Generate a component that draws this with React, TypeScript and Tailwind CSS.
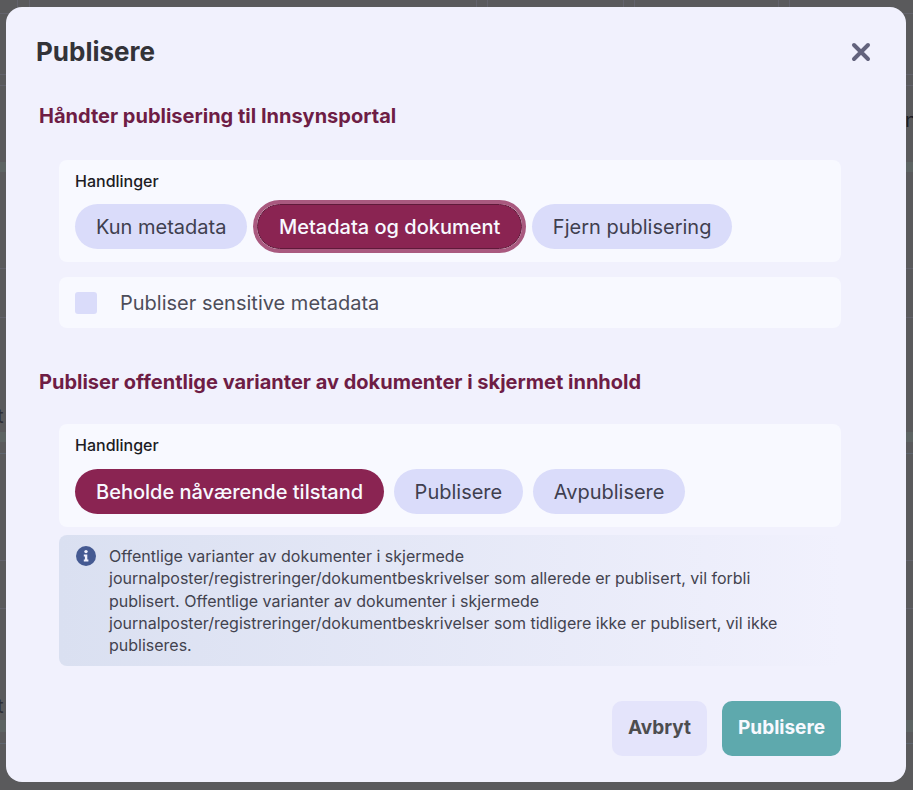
const F = "font-['Inter',sans-serif]";

const ROW_LINES: { top: number; h: number; color: string }[] = [
  { top: 13, h: 1, color: "#63636c" },
  { top: 74, h: 1, color: "#63636c" },
  { top: 85, h: 1, color: "#63636c" },
  { top: 162, h: 10, color: "#5d6463" },
  { top: 268, h: 1, color: "#63636c" },
  { top: 317, h: 1, color: "#63636c" },
  { top: 432, h: 10, color: "#5d6463" },
  { top: 453, h: 1, color: "#5f6670" },
  { top: 560, h: 1, color: "#63636c" },
  { top: 608, h: 1, color: "#63636c" },
  { top: 720, h: 12, color: "#5d6463" },
  { top: 743, h: 1, color: "#5f6670" },
];
const COL_LINES = [17, 29, 476, 487, 623, 634, 778, 789];

function Backdrop() {
  return (
    <div className="absolute inset-0">
      {ROW_LINES.map((l) => (
        <div key={l.top} className="absolute inset-x-0" style={{ top: l.top, height: l.h, backgroundColor: l.color }} />
      ))}
      {COL_LINES.map((x) => (
        <div key={x} className="absolute top-0 h-[8px] w-px bg-[#63636c]" style={{ left: x }} />
      ))}
      <span className="absolute top-[404px] -left-[3px] text-[20px] leading-[24px] text-[#2e2e36]">t</span>
      <span className="absolute top-[694px] -left-[3px] text-[20px] leading-[24px] text-[#2e2e36]">t</span>
      <span className="absolute top-[108px] left-[905px] text-[20px] leading-[24px] text-[#1f1f26]">n</span>
    </div>
  );
}

function Pill({ label, active, focus }: { label: string; active?: boolean; focus?: boolean }) {
  return (
    <button
      className={
        "h-[45px] rounded-full px-[21px] text-[20px] whitespace-nowrap " +
        (active ? "bg-[#8a2452] font-medium text-[#f8f9ff] " : "bg-[#dadcfa] text-[#3f3f4f] ") +
        (focus ? "border border-[#5f1a3a] outline-[4px] outline-[#a9597f]" : "")
      }
    >
      {label}
    </button>
  );
}

function Actions({ items, className, rowClass }: { items: { label: string; active?: boolean; focus?: boolean }[]; className: string; rowClass: string }) {
  return (
    <div className={"rounded-lg bg-[#f8f9ff] px-4 " + className}>
      <div className="text-[16px] leading-[20px] font-medium text-[#1c1c24]">Handlinger</div>
      <div className={"flex gap-[9.5px] " + rowClass}>
        {items.map((i) => (
          <Pill key={i.label} {...i} />
        ))}
      </div>
    </div>
  );
}

export default function App() {
  return (
    <div className={F + " relative h-[790px] w-[913px] overflow-hidden bg-[#5a5a5c] pt-[7px] pl-[6px]"}>
      <Backdrop />
      <div className="relative h-[775px] w-[900px] rounded-2xl bg-[#f1f1fd] pt-[30px] pr-[65px] pl-[30px]">
        <div className="flex items-center justify-between">
          <h1 className="text-[26px] leading-[30px] font-bold text-[#333338]">Publisere</h1>
          <svg width="20" height="20" viewBox="0 0 20 20" className="-mr-[30px]">
            <path d="M3 3L17 17M17 3L3 17" stroke="#63637d" strokeWidth="4" strokeLinecap="round" />
          </svg>
        </div>

        <h2 className="mt-[36px] ml-[3px] text-[20px] leading-[26px] font-bold text-[#6e1d45]">
          Håndter publisering til Innsynsportal
        </h2>

        <div className="ml-[23px]">
          <Actions
            className="mt-[31px] h-[102px] pt-[11px]"
            rowClass="mt-[13px]"
            items={[{ label: "Kun metadata" }, { label: "Metadata og dokument", active: true, focus: true }, { label: "Fjern publisering" }]}
          />
          <div className="mt-[15px] flex h-[51px] items-center rounded-lg bg-[#f8f9ff] px-4">
            <span className="h-[22px] w-[22px] rounded-[3px] bg-[#dadcfa]" />
            <span className="ml-[23px] text-[20px] text-[#4d4d5a]">Publiser sensitive metadata</span>
          </div>
        </div>

        <h2 className="mt-[41px] ml-[3px] text-[20px] leading-[26px] font-bold text-[#6e1d45]">
          Publiser offentlige varianter av dokumenter i skjermet innhold
        </h2>

        <div className="ml-[23px]">
          <Actions
            className="mt-[29px] h-[103px] pt-[11px]"
            rowClass="mt-[14px]"
            items={[{ label: "Beholde nåværende tilstand", active: true }, { label: "Publisere" }, { label: "Avpublisere" }]}
          />
          <div className="mt-[8px] flex h-[131px] rounded-lg bg-gradient-to-r from-[#dae0f1] to-[#f1f1fd] pt-[10px] pr-4 pl-[17px]">
            <svg width="20" height="20" viewBox="0 0 20 20" className="mt-px shrink-0">
              <circle cx="10" cy="10" r="10" fill="#455a92" />
              <circle cx="10" cy="5.6" r="1.7" fill="#f1f1fd" />
              <path d="M7.8 8.6H11.3V13.6H12.4V15.4H7.8V13.6H8.9V10.4H7.8Z" fill="#f1f1fd" />
            </svg>
            <p className="ml-[13px] w-[700px] text-[16px] leading-[22.3px] text-[#43434f]">
              Offentlige varianter av dokumenter i skjermede journalposter/registreringer/dokumentbeskrivelser som allerede er publisert, vil forbli publisert. Offentlige varianter av dokumenter i skjermede journalposter/registreringer/dokumentbeskrivelser som tidligere ikke er publisert, vil ikke publiseres.
            </p>
          </div>
          <div className="mt-[35px] flex justify-end gap-[15px]">
            <button className="h-[55px] rounded-[10px] bg-[#e4e4fb] px-4 text-[19px] font-bold text-[#4d4d4f]">Avbryt</button>
            <button className="h-[55px] rounded-[10px] bg-[#5ea9ad] px-4 text-[19px] font-bold text-[#f8f9ff]">Publisere</button>
          </div>
        </div>
      </div>
    </div>
  );
}
